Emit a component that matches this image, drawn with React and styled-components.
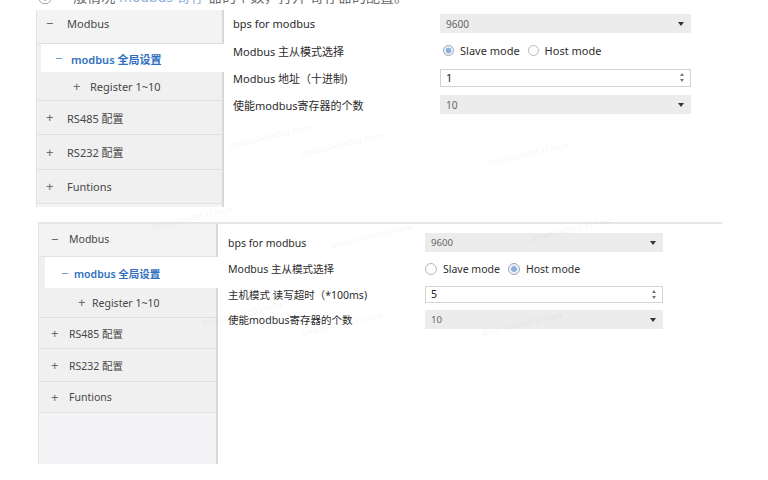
import React from "react";
import styled, { createGlobalStyle } from "styled-components";

const GlobalStyle = createGlobalStyle`
  html, body {
    margin: 0;
    padding: 0;
    background: #ffffff;
  }
  body {
    font-family: "Noto Sans", "Noto Sans CJK SC", sans-serif;
    color: #333333;
  }
`;

export const Page = styled.div`
  position: relative;
  width: 768px;
  height: 480px;
  overflow: hidden;
  background: #ffffff;
`;

export const CutLine = styled.div`
  height: 10px;
  overflow: hidden;
  padding-left: 38px;
  div {
    margin-top: -11px;
    font-size: 14px;
    line-height: 16px;
    color: #6a6a6a;
    white-space: nowrap;
  }
  span {
    color: #8fb0d8;
  }
`;

export const Panel = styled.section`
  display: flex;
  width: ${({ $w }) => $w}px;
  height: ${({ $h }) => $h}px;
  margin-left: ${({ $left }) => $left}px;
  margin-top: ${({ $top }) => $top}px;
  border-top: ${({ $rule }) => ($rule ? "2px solid #e6e6e6" : "none")};
  font-size: ${({ $fs }) => $fs}px;
`;

export const Sidebar = styled.nav`
  width: ${({ $w }) => $w}px;
  flex-shrink: 0;
  display: flex;
  flex-direction: column;
  background: #f0f0f0;
  border-left: 1px solid #e4e4e4;
  box-sizing: border-box;
`;

export const NavRow = styled.div`
  display: flex;
  align-items: center;
  box-sizing: border-box;
  height: ${({ $h }) => $h}px;
  margin-left: ${({ $inset }) => $inset || 0}px;
  padding-left: ${({ $pad }) => $pad}px;
  padding-top: ${({ $active }) => ($active ? 2 : 0)}px;
  padding-bottom: ${({ $lift }) => $lift || 0}px;
  background: ${({ $active, $head }) =>
    $active ? "#ffffff" : $head ? "#f3f3f3" : "#f0f0f0"};
  border-bottom: 1px solid ${({ $active }) => ($active ? "#ffffff" : "#e0e0e0")};
  border-right: ${({ $active }) => ($active ? "none" : "2px solid #d8d8d8")};
  color: ${({ $active }) => ($active ? "#2f6fbf" : "#474747")};
  font-weight: ${({ $active }) => ($active ? 600 : 400)};
  white-space: nowrap;
`;

export const Filler = styled.div`
  flex: 1;
  background: #f4f4f6;
  border-right: 2px solid #d8d8d8;
`;

export const Sign = styled.span`
  width: ${({ $w }) => $w}px;
  flex-shrink: 0;
  color: ${({ $blue }) => ($blue ? "#6f9ad0" : "#6b6b6b")};
  font-weight: 400;
  font-size: 13px;
  line-height: 1;
`;

export const Form = styled.div`
  flex: 1;
  display: grid;
  grid-template-columns: ${({ $lw }) => $lw}px ${({ $cw }) => $cw}px;
  grid-auto-rows: ${({ $rh }) => $rh}px;
  align-items: center;
  align-content: start;
  padding: ${({ $pt }) => $pt}px 0 0 ${({ $pl }) => $pl}px;
`;

export const Label = styled.span`
  color: #2b2b2b;
  white-space: nowrap;
`;

export const Select = styled.div`
  height: ${({ $h }) => $h}px;
  display: flex;
  align-items: center;
  justify-content: space-between;
  padding: 0 7px 0 6px;
  background: #ececec;
  color: #666666;
  font-size: 0.92em;
  &::after {
    content: "";
    border-left: 3.5px solid transparent;
    border-right: 3.5px solid transparent;
    border-top: 4px solid #333333;
  }
`;

export const NumberBox = styled.div`
  height: ${({ $h }) => $h}px;
  box-sizing: border-box;
  display: flex;
  align-items: center;
  justify-content: space-between;
  padding: 0 6px 0 5px;
  background: #ffffff;
  border: 1px solid #d2d2d2;
  color: #222222;
`;

export const Spin = styled.span`
  display: flex;
  flex-direction: column;
  gap: 3px;
  &::before,
  &::after {
    content: "";
    border-left: 2.5px solid transparent;
    border-right: 2.5px solid transparent;
  }
  &::before {
    border-bottom: 3px solid #777777;
  }
  &::after {
    border-top: 3px solid #777777;
  }
`;

export const RadioGroup = styled.div`
  display: flex;
  align-items: center;
  padding-left: ${({ $pl }) => $pl}px;
  color: #2e2e2e;
  white-space: nowrap;
`;

export const Radio = styled.span`
  width: ${({ $d }) => $d}px;
  height: ${({ $d }) => $d}px;
  box-sizing: border-box;
  border-radius: 50%;
  margin-right: 6px;
  border: 1px solid ${({ $on }) => ($on ? "#9aa6b6" : "#b8b8b8")};
  background: ${({ $on }) =>
    $on ? "radial-gradient(circle, #8fb0df 0 2.6px, #eef2f8 3.2px)" : "#ffffff"};
  &:not(:first-child) {
    margin-left: 8px;
  }
`;

export const Mark = styled.span`
  position: absolute;
  left: ${({ $x }) => $x}px;
  top: ${({ $y }) => $y}px;
  font-family: "Liberation Sans", sans-serif;
  font-size: 8px;
  color: rgba(0, 0, 0, 0.07);
  transform: rotate(-13deg);
  white-space: nowrap;
  pointer-events: none;
`;

const panels = [
  {
    key: "slave",
    left: 36,
    top: 0,
    w: 690,
    h: 197,
    fs: 11,
    rule: false,
    side: 188,
    rows: [34, 28, 29, 34, 35, 34],
    lift: 6,
    head: 9,
    headText: 21,
    selInset: 4,
    selPad: 14,
    subPad: 36,
    signW: 16,
    form: { lw: 207, cw: 251, rh: 27, pt: 0, pl: 9, ctl: 19, num: 18 },
    radio: { pl: 3, d: 11, slave: true },
    third: ["Modbus 地址（十进制)", "1"],
  },
  {
    key: "host",
    left: 38,
    top: 15,
    w: 684,
    h: 240,
    fs: 10.5,
    rule: true,
    side: 180,
    rows: [33, 31, 30, 31, 33, 31],
    lift: 2,
    head: 12,
    headText: 18,
    selInset: 6,
    selPad: 16,
    subPad: 39,
    signW: 13,
    form: { lw: 197, cw: 238, rh: 25.7, pt: 6, pl: 10, ctl: 19, num: 17 },
    radio: { pl: 0, d: 12, slave: false },
    third: ["主机模式 读写超时（*100ms)", "5"],
  },
];

const marks = [
  [228, 132, "Shop1104560533 Store"],
  [300, 140, "Shop1104560533 Store"],
  [486, 150, "Shop1104560533 Store"],
  [150, 214, "Shop1104560533 Store"],
  [330, 232, "Shop1104560533 Store"],
  [530, 225, "Shop1104560533 Store"],
  [300, 320, "Shop1104560533 Store"],
  [200, 310, "Shop1104560533 Store"],
  [480, 320, "Shop1104560533 Store"],
];

function ConfigPanel({ p }) {
  const [hH, selH, regH, r1, r2, r3] = p.rows;
  return (
    <Panel $left={p.left} $top={p.top} $w={p.w} $h={p.h} $fs={p.fs} $rule={p.rule}>
      <Sidebar $w={p.side}>
        <NavRow $h={hH} $pad={p.head} $lift={p.lift} $head>
          <Sign $w={p.headText}>−</Sign>Modbus
        </NavRow>
        <NavRow $h={selH} $inset={p.selInset} $pad={p.selPad} $active>
          <Sign $w={p.signW} $blue>−</Sign>modbus 全局设置
        </NavRow>
        <NavRow $h={regH} $pad={p.subPad}>
          <Sign $w={p.signW + 1}>+</Sign>Register 1~10
        </NavRow>
        <NavRow $h={r1} $pad={p.head}>
          <Sign $w={p.headText}>+</Sign>RS485 配置
        </NavRow>
        <NavRow $h={r2} $pad={p.head}>
          <Sign $w={p.headText}>+</Sign>RS232 配置
        </NavRow>
        <NavRow $h={r3} $pad={p.head}>
          <Sign $w={p.headText}>+</Sign>Funtions
        </NavRow>
        <Filler />
      </Sidebar>
      <Form $lw={p.form.lw} $cw={p.form.cw} $rh={p.form.rh} $pt={p.form.pt} $pl={p.form.pl}>
        <Label>bps for modbus</Label>
        <Select $h={p.form.ctl}>9600</Select>
        <Label>Modbus 主从模式选择</Label>
        <RadioGroup $pl={p.radio.pl}>
          <Radio $d={p.radio.d} $on={p.radio.slave} />
          Slave mode
          <Radio $d={p.radio.d} $on={!p.radio.slave} />
          Host mode
        </RadioGroup>
        <Label>{p.third[0]}</Label>
        <NumberBox $h={p.form.num}>
          {p.third[1]}
          <Spin />
        </NumberBox>
        <Label>使能modbus寄存器的个数</Label>
        <Select $h={p.form.ctl}>10</Select>
      </Form>
    </Panel>
  );
}

export default function App() {
  return (
    <Page>
      <GlobalStyle />
      <CutLine>
        <div>
          ① &nbsp;一般情况 <span>modbus 寄存</span> 器的个数，打开 寄存器的配置。
        </div>
      </CutLine>
      {panels.map((p) => (
        <ConfigPanel key={p.key} p={p} />
      ))}
      {marks.map(([x, y, t], i) => (
        <Mark key={i} $x={x} $y={y}>
          {t}
        </Mark>
      ))}
    </Page>
  );
}
